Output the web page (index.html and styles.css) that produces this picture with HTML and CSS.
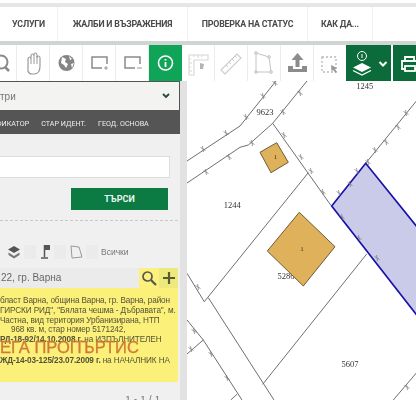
FILE: index.html
```html
<!DOCTYPE html>
<html lang="bg">
<head>
  <meta charset="UTF-8">
  <meta name="viewport" content="width=device-width, initial-scale=1.0">
  <title>Кадастрална карта</title>
  <link rel="stylesheet" href="styles.css">
</head>
<body>

<div class="page">
  <nav class="nav">
    <a class="nav-item nav-first">УСЛУГИ</a>
    <a class="nav-item nav-second">ЖАЛБИ И ВЪЗРАЖЕНИЯ</a>
    <a class="nav-item nav-third">ПРОВЕРКА НА СТАТУС</a>
    <a class="nav-item nav-fourth">КАК ДА...</a>
  </nav>

  <div class="toolbar">
    <!-- Map tools -->
    <div class="tool">
      <svg width="33" height="36" viewBox="0 0 33 36"><circle cx="17" cy="17" r="6.5" fill="none" stroke="#8a8a8a" stroke-width="2"/><path d="M21 22l4 4" stroke="#8a8a8a" stroke-width="2.5"/></svg>
    </div>
    <div class="tool">
      <svg width="33" height="36" viewBox="0 0 33 36"><path d="M11 20V14q0-2 1.500-2T14 14v-3q0-2 1.500-2t1.500 2v-1q0-2 1.500-2t1.500 2v3q0-2 1.500-2t1.500 2v8q0 8-6 8h-2q-3 0-4-3z" fill="none" stroke="#9a9a9a" stroke-width="1.200"/><path d="M14 14v5M17 11v8M20 11v8" stroke="#9a9a9a"/></svg>
    </div>
    <div class="tool">
      <svg width="33" height="36" viewBox="0 0 33 36"><circle cx="16.500" cy="18" r="8" fill="#858585"/><path d="M12 12l4 2-1 3 3 2-2 4-2-3-3-2zM19 11l3 3-2 1zM21 19l3-1-2 5z" fill="#fff"/></svg>
    </div>
    <div class="tool">
      <svg width="33" height="36" viewBox="0 0 33 36"><path d="M19 23H9V12h15v7" fill="none" stroke="#8a8a8a" stroke-width="1.500"/><path d="M23 21v4M21 23h4" stroke="#999"/></svg>
    </div>
    <div class="tool">
      <svg width="33" height="36" viewBox="0 0 33 36"><path d="M19 23H9V12h15v7" fill="none" stroke="#8a8a8a" stroke-width="1.500"/><path d="M21 23h5" stroke="#999"/></svg>
    </div>
    <div class="tool tool-on">
      <svg width="33" height="36" viewBox="0 0 33 36"><circle cx="16.500" cy="18" r="7" fill="none" stroke="#fff" stroke-width="1.600"/><path d="M16.500 17v5M16.500 14v1.500" stroke="#fff" stroke-width="1.800"/></svg>
    </div>
    <div class="tool">
      <svg width="33" height="36" viewBox="0 0 33 36"><path d="M7 10h19v5H12v15H7z" fill="none" stroke="#d6d6d6" stroke-width="1.100"/><path d="M7 14h2M7 18h3M7 22h2M7 26h3M12 10v2M16 10v3M20 10v2" stroke="#d6d6d6"/><path d="M18 18l4 1-1 5h-3z" fill="#b4b4b4"/></svg>
    </div>
    <div class="tool">
      <svg width="33" height="36" viewBox="0 0 33 36"><path d="M6 25L22 9l4 4-16 16z" fill="none" stroke="#ccc" stroke-width="1.100"/><path d="M11 20l2 2M14 17l2 2M17 14l2 2M20 11l2 2" stroke="#ccc"/></svg>
    </div>
    <div class="tool">
      <svg width="33" height="36" viewBox="0 0 33 36"><path d="M8 8l13 4 2 15H8z" fill="none" stroke="#c4c4c4"/><circle cx="8" cy="8" r="1.300" fill="#fff" stroke="#bbb"/><circle cx="21" cy="12" r="1.300" fill="#fff" stroke="#bbb"/><circle cx="23" cy="27" r="1.300" fill="#fff" stroke="#bbb"/><circle cx="8" cy="27" r="1.300" fill="#fff" stroke="#bbb"/></svg>
    </div>
    <div class="tool">
      <svg width="33" height="36" viewBox="0 0 33 36"><path d="M15 8l6 7h-4v7h-4v-7H9z" transform="translate(1.500 0)" fill="#8c8c8c"/><path d="M7 21h5v3h9v-3h5v6H7z" fill="#8c8c8c"/></svg>
    </div>
    <div class="tool tool-plain">
      <svg width="32" height="36" viewBox="0 0 32 36"><rect x="8" y="12" width="14" height="15" fill="none" stroke="#bbb" stroke-width="1.400" stroke-dasharray="2 2"/><path d="M17 20l6 3-2 1 2 3-1.500 1-2-3-2 1z" fill="#999"/></svg>
    </div>
    <div class="tool-group">
      <svg width="45" height="36" viewBox="0 0 45 36"><circle cx="16" cy="11" r="4.500" fill="none" stroke="#fff"/><path d="M16 9v4" stroke="#fff"/><path d="M16 18l9 4.500-9 4.500-9-4.500z" fill="#fff"/><path d="M7 25.500l9 4.500 9-4.500" fill="none" stroke="#fff" stroke-width="1.300"/><path d="M33.500 17l3.500 3.500 3.500-3.500" fill="none" stroke="#fff" stroke-width="2"/></svg>
    </div>
    <div class="tool-print">
      <svg width="23" height="36" viewBox="0 0 23 36"><path d="M12 16v-4h9v4M12 24H9v-8h16v8h-3" fill="none" stroke="#fff" stroke-width="1.800"/><rect x="12" y="21" width="10" height="5" fill="none" stroke="#fff" stroke-width="1.800"/></svg>
    </div>
  </div>

  <div class="main">
    <aside class="panel">
      <div class="panel-head">
        <span>три</span>
        <svg width="8" height="6" viewBox="0 0 8 6"><path d="M1 1l3 3 3-3" fill="none" stroke="#1f4a35" stroke-width="1.800"/></svg>
      </div>
      <div class="tabs">
        <span class="tab-first">ФИКАТОР</span>
        <span>СТАР ИДЕНТ.</span>
        <span>ГЕОД. ОСНОВА</span>
      </div>
      <div class="search">
        <input class="search-input" type="text">
        <button class="search-btn">ТЪРСИ</button>
      </div>
      <div class="filters">
        <svg width="14" height="14" viewBox="0 0 14 14"><path d="M7 1l6 3.500-6 3.500-6-3.500z" fill="#555"/><path d="M1.500 7.500L7 11l5.500-3.500V10L7 13.500 1.500 10z" fill="#777"/></svg>
        <span class="chip"></span>
        <svg width="12" height="15" viewBox="0 0 12 15"><path d="M5.500 1v12M2 14h7" stroke="#555" stroke-width="1.500"/><path d="M6 1h5v5H6z" fill="#555"/></svg>
        <span class="chip"></span>
        <svg width="14" height="15" viewBox="0 0 14 15"><path d="M2 2l8 1 3 10-10 1z" fill="none" stroke="#999"/></svg>
        <span class="chip"></span>
        <span class="filter-all">Всички</span>
      </div>
      <div class="result-head">
        <span class="result-title">22, гр. Варна</span>
        <span class="result-btn">
          <svg width="16" height="16" viewBox="0 0 16 16"><circle cx="6.500" cy="6.500" r="4.500" fill="none" stroke="#555" stroke-width="1.700"/><path d="M10 10l5 5" stroke="#555" stroke-width="2.200"/></svg>
        </span>
        <span class="result-btn result-btn-add">
          <svg width="14" height="14" viewBox="0 0 14 14"><path d="M7 1v12M1 7h12" stroke="#5b5a33" stroke-width="2.200"/></svg>
        </span>
      </div>
      <div class="result-body">
        <div>бласт Варна, община Варна, гр. Варна, район</div>
        <div>ГИРСКИ РИД", "Бялата чешма - Дъбравата", м.</div>
        <div>Частна, вид територия Урбанизирана, НТП</div>
        <div class="indent">968 кв. м, стар номер 5171242,</div>
        <div><b>РД-18-92/14.10.2008 г.</b> на ИЗПЪЛНИТЕЛЕН</div>
        <div class="owner">ЕГА ПРОПЪРТИС</div>
        <div><b>ЖД-14-03-125/23.07.2009 г.</b> на НАЧАЛНИК НА</div>
      </div>
      <div class="pager">1 - 1 / 1</div>
    </aside>

    <div class="strip"></div>

    <div class="map">
      <svg width="229" height="319" viewBox="187 81 229 319">
        <defs>
          <path id="t" d="M-2.500-1.500l5 3M-.5-3l1 6" stroke="#777" stroke-width=".7" fill="none"/>
        </defs>
        <polygon points="331.700,206 365.700,163.300 430,243 430,332" fill="#c9cbe8" stroke="#1a12a8" stroke-width="1.700"/>
        <g class="lot">
          <path d="M276 81L240 126 187 161"/>
          <path d="M307 81L272.700 123.300 248.300 145 240 147.300 187 183"/>
          <path d="M272.700 123.300L331 205.500"/>
          <path d="M365.700 163.300L418 99"/>
          <path d="M308.300 172.700L204.300 301.700 187 273.300"/>
          <path d="M208.300 297.700L274 400"/>
          <path d="M262.700 384.300L366.700 254"/>
          <path d="M187 320L203.300 340 242 400"/>
          <path d="M203.300 340L187 354"/>
          <path d="M230.700 400L237.300 394"/>
          <path d="M393.300 400L418 371"/>
        </g>
        <use href="#t" x="203" y="149"/><use href="#t" x="226" y="133"/><use href="#t" x="246" y="117"/>
        <use href="#t" x="283" y="112"/><use href="#t" x="284" y="135"/><use href="#t" x="301" y="157"/>
        <use href="#t" x="311" y="171"/><use href="#t" x="323" y="192"/><use href="#t" x="339" y="193"/>
        <use href="#t" x="252" y="143"/><use href="#t" x="229" y="157"/><use href="#t" x="206" y="172"/>
        <use href="#t" x="350" y="184"/><use href="#t" x="342" y="217"/><use href="#t" x="359" y="238"/>
        <use href="#t" x="357" y="171"/><use href="#t" x="368" y="162"/><use href="#t" x="375" y="150"/>
        <use href="#t" x="386" y="142"/><use href="#t" x="398" y="127"/><use href="#t" x="406" y="113"/>
        <use href="#t" x="198" y="287"/><use href="#t" x="194" y="331"/><use href="#t" x="191" y="349"/>
        <use href="#t" x="211" y="354"/><use href="#t" x="227" y="378"/><use href="#t" x="407" y="387"/>
        <use href="#t" x="377" y="258"/><use href="#t" x="275" y="83"/><use href="#t" x="263" y="96"/>
        <use href="#t" x="300" y="93"/>
        <text x="265" y="114.500" class="label">9623</text>
        <text x="364.700" y="89" class="label">1245</text>
        <text x="232.300" y="207.500" class="label">1244</text>
        <text x="286" y="278.500" class="label">5286</text>
        <text x="350" y="367" class="label">5607</text>
        <polygon points="260,152.300 276.700,142.700 288.300,162.300 271,172.700" class="house"/>
        <polygon points="299.300,212.300 335,246.700 303.300,286 267.300,251" class="house"/>
        <text x="275.500" y="159" class="label label-small">1</text>
        <text x="302" y="250.500" class="label label-small">1</text>
      </svg>
    </div>
  </div>
</div>

</body>
</html>
```

FILE: styles.css
```css
html, body {
  margin: 0;
  height: 100%;
  overflow: hidden;
}
body {
  font-family: "Liberation Sans", sans-serif;
  background: #fff;
  color: #555;
}
svg {
  display: block;
}
.page {
  display: flex;
  flex-direction: column;
  height: 400px;
  padding-top: 3px;
  box-sizing: border-box;
  filter: blur(0.35px);
}
.nav {
  display: flex;
  height: 34px;
  flex: none;
  border-top: 4px solid #e6e6e6;
  border-bottom: 4px solid #cfd5d2;
  font-family: Roboto, sans-serif;
  font-weight: 700;
  font-size: 8.800px;
  letter-spacing: -0.2px;
  color: #4a4a4a;
}
.nav-item {
  display: flex;
  align-items: center;
  justify-content: center;
  border-right: 1px solid #f0f0f0;
  box-sizing: border-box;
  white-space: nowrap;
}
.nav-first { width: 58px; }
.nav-second { width: 130px; }
.nav-third { width: 120px; }
.nav-fourth { width: 65px; }

.toolbar {
  display: flex;
  height: 36px;
  flex: none;
  margin-left: -16px;
}
.tool {
  width: 33px;
  box-sizing: border-box;
  border-right: 1px solid #ececec;
  background: #fff;
}
.tool svg {
  margin-right: -1px;
}
.tool-on {
  background: #0fa458;
  border-right: none;
}
.tool-plain {
  width: 32px;
  border-right: none;
}
.tool-group {
  width: 45px;
  background: #0b6b3a;
  margin-right: 2px;
}
.tool-print {
  width: 23px;
  background: #0b6b3a;
}

.main {
  display: flex;
  flex: 1;
  min-height: 0;
}
.panel {
  width: 180px;
  flex: none;
  background: #f0f0f0;
  overflow: hidden;
}
.panel-head {
  display: flex;
  align-items: center;
  justify-content: space-between;
  height: 29px;
  padding: 0 9px 0 0;
  box-sizing: border-box;
  border-top: 1px solid #555;
  border-right: 1px solid #555;
  background: #f3f3f1;
  font-size: 10px;
  color: #777;
}
.tabs {
  display: flex;
  gap: 12px;
  height: 24px;
  padding-top: 8px;
  box-sizing: border-box;
  background: #555;
  color: #eee;
  font-family: Roboto, sans-serif;
  font-size: 7.200px;
  line-height: 11px;
  white-space: nowrap;
}
.tab-first {
  margin-left: -4px;
}
.search {
  display: flex;
  flex-direction: column;
  align-items: flex-end;
  height: 87px;
  padding: 22px 10px 0 0;
  box-sizing: border-box;
  border-bottom: 1px dashed #c8c8c8;
  margin-right: 2px;
}
.search-input {
  width: 172px;
  height: 22px;
  box-sizing: border-box;
  margin: 0 -2px 0 0;
  border: 1px solid #ddd;
  background: #fff;
}
.search-btn {
  width: 97px;
  height: 22px;
  margin-top: 10px;
  border: none;
  background: #0b7a43;
  color: #e9f5ee;
  font-family: Roboto, sans-serif;
  font-weight: 700;
  font-size: 9px;
  padding: 0;
}
.filters {
  display: flex;
  align-items: center;
  height: 47px;
  padding: 14px 0 0 7px;
  box-sizing: border-box;
  font-size: 8.500px;
  color: #777;
}
.chip {
  width: 12px;
  height: 14px;
  margin: 0 3px;
  background: #ebebeb;
}
.result-head {
  display: flex;
  height: 20px;
  margin-right: 2px;
  font-size: 10px;
  color: #666;
}
.result-title {
  width: 139px;
  padding-left: 1px;
  box-sizing: border-box;
  line-height: 20px;
  background: #ebebeb;
}
.result-btn {
  display: flex;
  align-items: center;
  justify-content: center;
  width: 20px;
  background: #fbf17c;
}
.result-btn-add {
  width: 19px;
  background: #eee97c;
}
.result-body {
  height: 94px;
  margin-right: 2px;
  padding-top: 8px;
  box-sizing: border-box;
  background: #fbf07a;
  color: #55523a;
  font-size: 8.200px;
  letter-spacing: -0.12px;
  line-height: 9.800px;
  white-space: nowrap;
  overflow: hidden;
}
.indent {
  padding-left: 11px;
}
.owner {
  height: 14px;
  margin-top: -5px;
  color: #cf7a34;
  font-size: 16.500px;
  letter-spacing: 0;
  line-height: 14px;
  -webkit-text-stroke: 0.3px #cf7a34;
}
.result-body .owner + div {
  margin-top: 2px;
}
.pager {
  padding: 12px 20px 0 0;
  text-align: right;
  font-size: 9px;
  color: #666;
  word-spacing: 1px;
}

.strip {
  width: 7px;
  flex: none;
  background: #e2e2e2;
}
.map {
  flex: 1;
  background: #fff;
}
.lot path {
  fill: none;
  stroke: #5f5f5f;
  stroke-width: 0.9;
}
.house {
  fill: #deb15a;
  stroke: #6b5b3a;
  stroke-width: 1;
}
.label {
  font-family: "Liberation Serif", serif;
  font-size: 8.500px;
  fill: #333;
  text-anchor: middle;
}
.label-small {
  font-size: 7px;
}
```
